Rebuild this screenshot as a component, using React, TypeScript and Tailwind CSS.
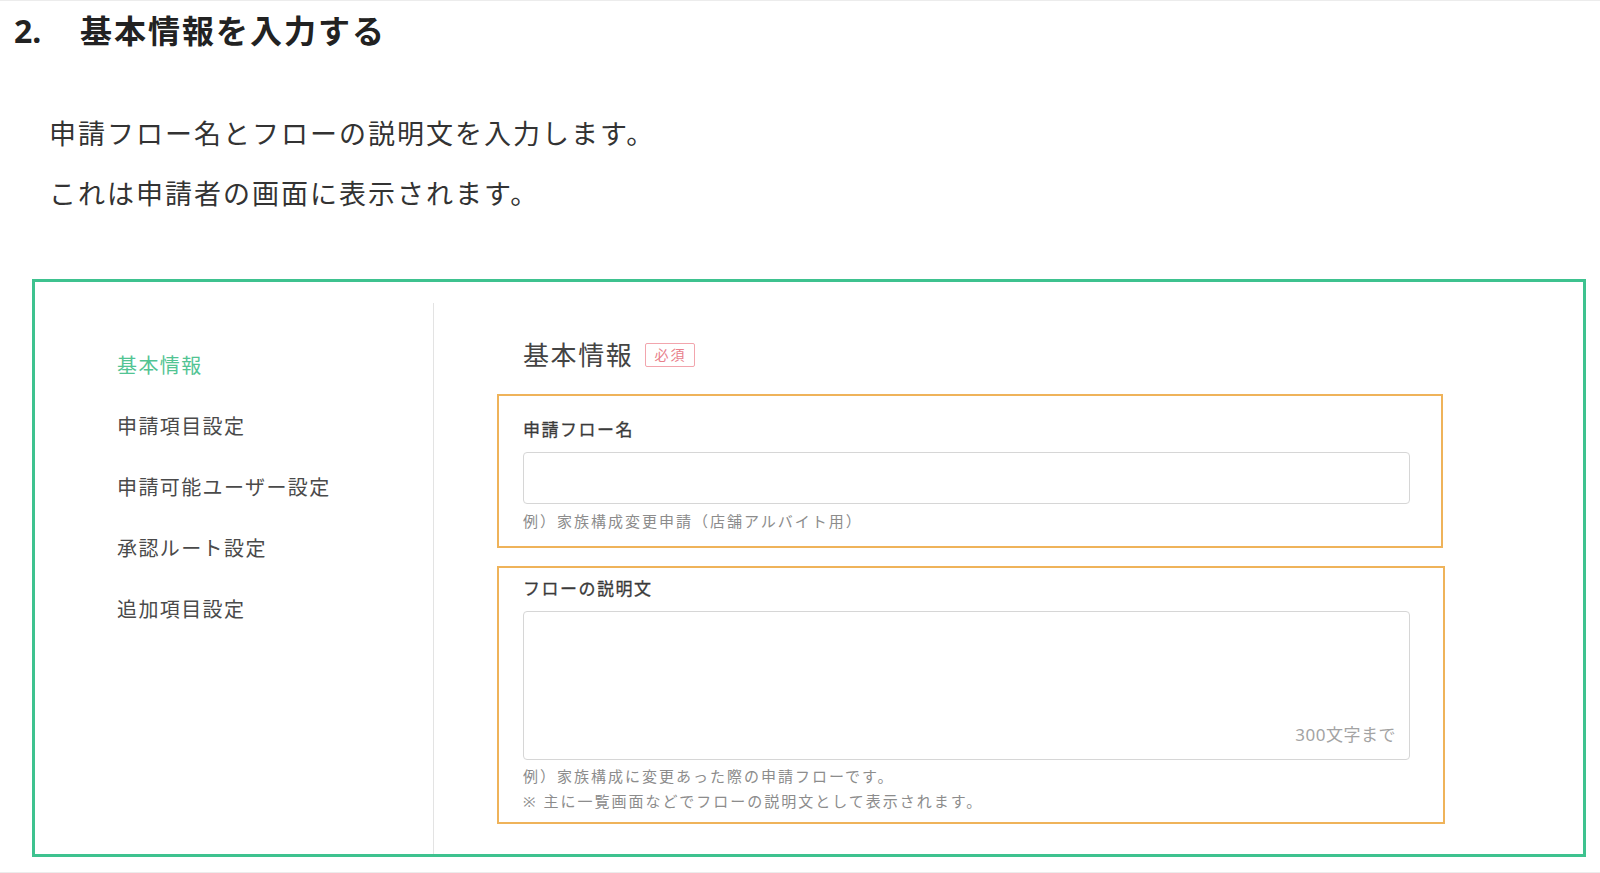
import React from "react";

const navItems = [
  "基本情報",
  "申請項目設定",
  "申請可能ユーザー設定",
  "承認ルート設定",
  "追加項目設定",
];

const SideNav: React.FC<{ active: number }> = ({ active }) => {
  return (
    <div className="flex w-[398px] shrink-0 flex-col gap-[33px] pl-[82px] pt-[70px]">
      {navItems.map((label, index) => (
        <div
          key={label}
          className={
            index === active
              ? "text-[20px] leading-[28px] tracking-[1.4px] text-[#52c493]"
              : "text-[20px] leading-[28px] tracking-[1.4px] text-[#4a4a4a]"
          }
        >
          {label}
        </div>
      ))}
    </div>
  );
};

const App: React.FC = () => {
  return (
    <div
      className="flex h-[873px] w-full flex-col border-t border-b border-[#ececec] bg-white text-[#333]"
      style={{ fontFamily: '"Noto Sans", "Noto Sans CJK JP", sans-serif' }}
    >
      {/* section heading */}
      <h2 className="mt-[14px] flex pl-[14px] text-[32px] font-bold leading-[32px] text-[#222]">
        <span className="w-[66px]">2.</span>
        <span className="tracking-[2px]">基本情報を入力する</span>
      </h2>

      <p className="mt-[67px] pl-[49px] text-[27px] leading-[40px] tracking-[2px] text-[#333]">
        申請フロー名とフローの説明文を入力します。
      </p>
      <p className="mt-[20px] pl-[49px] text-[27px] leading-[40px] tracking-[2px] text-[#333]">
        これは申請者の画面に表示されます。
      </p>

      {/* screenshot frame */}
      <div className="ml-[32px] mt-[65px] flex h-[578px] w-[1554px] border-[3px] border-[#3ec28f]">
        <SideNav active={0} />

        <div className="mt-[21px] flex flex-1 flex-col border-l border-[#e3e3e3] pl-[63px] pt-[36px]">
          <div className="flex items-center pl-[26px]">
            <span className="text-[26px] leading-[32px] tracking-[1.6px] text-[#444]">
              基本情報
            </span>
            <span className="ml-[12px] flex h-[24px] items-center rounded-[2px] border-[1.5px] border-[#f2a5ad] px-[8px] text-[14px] leading-none tracking-[2px] text-[#e8808b]">
              必須
            </span>
          </div>

          {/* flow name */}
          <div className="mt-[23px] flex w-[946px] flex-col border-2 border-[#efb35a] pb-[14px] pl-[24px] pt-[23px]">
            <label className="text-[17px] leading-[22px] tracking-[1.5px] text-[#3a3a3a] [-webkit-text-stroke:0.3px_#3a3a3a]">
              申請フロー名
            </label>
            <div className="mt-[11px] h-[52px] w-[887px] rounded-[4px] border-[1.5px] border-[#d6d6d6] bg-white" />
            <p className="mt-[6px] text-[15px] leading-[22px] tracking-[2px] text-[#8c8c8c]">
              例）家族構成変更申請（店舗アルバイト用）
            </p>
          </div>

          {/* flow description */}
          <div className="mt-[18px] flex w-[948px] flex-col border-2 border-[#efb35a] pb-[8px] pl-[24px] pt-[10px]">
            <label className="text-[17px] leading-[22px] tracking-[1.5px] text-[#3a3a3a] [-webkit-text-stroke:0.3px_#3a3a3a]">
              フローの説明文
            </label>
            <div className="mt-[11px] flex h-[149px] w-[887px] items-end justify-end rounded-[4px] border-[1.5px] border-[#d6d6d6] bg-white pb-[13px] pr-[13px]">
              <span className="text-[17px] leading-[22px] tracking-[0.5px] text-[#a3a3a3]">
                300文字まで
              </span>
            </div>
            <p className="mt-[4px] text-[15px] leading-[25px] tracking-[2px] text-[#8c8c8c]">
              例）家族構成に変更あった際の申請フローです。
            </p>
            <p className="text-[15px] leading-[25px] tracking-[2px] text-[#8c8c8c]">
              ※ 主に一覧画面などでフローの説明文として表示されます。
            </p>
          </div>
        </div>
      </div>
    </div>
  );
};

export default App;
